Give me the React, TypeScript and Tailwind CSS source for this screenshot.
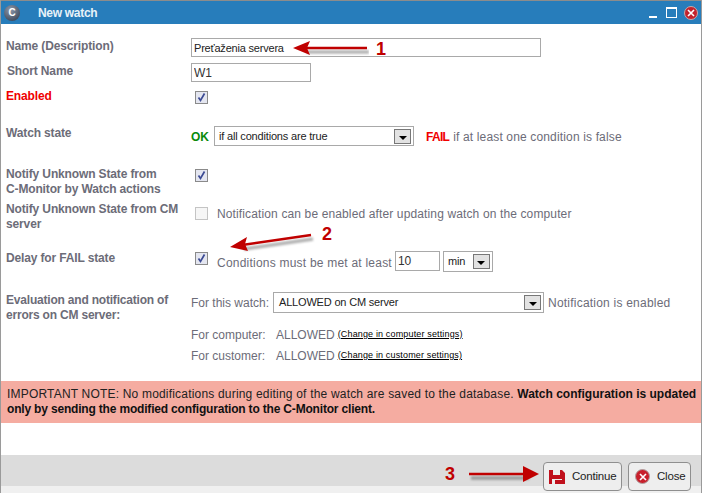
import { ReactNode } from "react";

function Check({ checked = true, className = "" }: { checked?: boolean; className?: string }) {
    return (
        <span className={`flex h-[13px] w-[13px] shrink-0 items-center justify-center border ${checked ? "border-[#8a8a8a] bg-[#e4e6f0]" : "border-[#c4c4c4] bg-[#f6f6f6]"} ${className}`}>
            {checked && (
                <svg width="11" height="11" viewBox="0 0 11 11">
                    <path d="M2.5 5.5 L4.5 8.5 L8.5 1.5" fill="none" stroke="#3b4a94" strokeWidth="1.7" />
                </svg>
            )}
        </span>
    );
}

function Select({ value, className }: { value: string; className: string }) {
    return (
        <div className={`flex items-center justify-between border border-[#a9a9a9] bg-white pl-[4px] pr-[2px] text-[11px] tracking-[-0.18px] text-[#222] ${className}`}>
            <span>{value}</span>
            <span className="flex h-[15px] w-[17px] items-center justify-center border border-[#777] bg-[#e2e2e2]">
                <span className="mt-[3px] h-0 w-0 border-x-[4px] border-t-[4px] border-x-transparent border-t-black" />
            </span>
        </div>
    );
}

function Row({ h, label, children, labelClass = "text-[#6c6c78]" }: { h: string; label: ReactNode; children?: ReactNode; labelClass?: string }) {
    return (
        <div className={`flex ${h}`}>
            <div className={`w-[185px] shrink-0 text-[12px] font-bold leading-[15px] tracking-[-0.14px] ${labelClass}`}>{label}</div>
            <div className="min-w-0 flex-1">{children}</div>
        </div>
    );
}

function Arrow({ className, width, height, d, head }: { className: string; width: number; height: number; d: string; head: string }) {
    return (
        <svg className={`absolute ${className}`} width={width} height={height} viewBox={`0 0 ${width} ${height}`}>
            <path className="blur-[1px]" d={d} fill="none" stroke="#000" strokeOpacity="0.3" strokeWidth="3.5" transform="translate(2 4)" />
            <path d={d} fill="none" stroke="#c00000" strokeWidth="2.5" />
            <polygon points={head} fill="#c00000" />
        </svg>
    );
}

export default function App() {
    return (
        <div className="relative flex h-[493px] w-[702px] flex-col overflow-hidden border-x border-[#9a9a9a] bg-white font-['Liberation_Sans',Arial,sans-serif] text-[12px] text-[#6c6c78]">
            {/* title bar */}
            <div className="flex h-[24px] shrink-0 items-center border-t border-[#8c8c8c] bg-[#277dbb] pl-[3px]">
                <span className="flex h-[16px] w-[16px] items-center justify-center rounded-full bg-[radial-gradient(circle_at_40%_30%,#8d99ab,#2c3648)] text-[10px] font-bold leading-none text-white">C</span>
                <span className="ml-[18px] text-[12px] font-bold tracking-[-0.3px] text-[#e8f2f8]">New watch</span>
                <div className="ml-auto flex items-center pr-[3px]">
                    <span className="mt-[9px] h-[2px] w-[8px] bg-white" />
                    <span className="ml-[9px] h-[11px] w-[11px] border border-t-[2px] border-white" />
                    <span className="ml-[7px] flex h-[14px] w-[14px] items-center justify-center rounded-full border border-[#c9a9a9] bg-[#c2222c]">
                        <svg width="8" height="8" viewBox="0 0 8 8">
                            <path d="M1 1 L7 7 M7 1 L1 7" stroke="#fff" strokeWidth="1.6" />
                        </svg>
                    </span>
                </div>
            </div>

            {/* form */}
            <div className="flex-1 pl-[5px] pt-[14px]">
                <Row h="h-[25px]" label={<span className="relative top-[1px]">Name (Description)</span>}>
                    <input readOnly value="Preťaženia servera" className="h-[19px] w-[350px] border border-[#a9a9a9] px-[2px] text-[11px] tracking-[-0.2px] text-[#222] outline-none" />
                </Row>
                <Row h="h-[25px]" label={<span className="relative left-[1px] top-[1px]">Short Name</span>}>
                    <input readOnly value="W1" className="h-[19px] w-[120px] border border-[#a9a9a9] px-[2px] text-[12px] text-[#333] outline-none" />
                </Row>
                <Row h="h-[38px]" label={<span className="relative top-[1px]">Enabled</span>} labelClass="text-[#f00000]">
                    <div className="pl-[4px] pt-[3px]"><Check /></div>
                </Row>
                <Row h="h-[41px]" label="Watch state">
                    <div className="flex h-[20px] items-center">
                        <span className="w-[23px] pt-[1px] font-bold text-[#0a8a0a]">OK</span>
                        <Select value="if all conditions are true" className="h-[20px] w-[200px]" />
                        <span className="ml-[12px] pt-[1px] font-bold tracking-[-0.7px] text-[#f00000]">FAIL</span>
                        <span className="ml-[4px] pt-[1px] tracking-[0.15px]">if at least one condition is false</span>
                    </div>
                </Row>
                <Row h="h-[35px]" label={<>Notify Unknown State from<br />C-Monitor by Watch actions</>}>
                    <div className="pl-[4px] pt-[2px]"><Check /></div>
                </Row>
                <Row h="h-[48px]" label={<>Notify Unknown State from CM<br />server</>}>
                    <div className="flex items-center pl-[4px] pt-[1px]">
                        <Check checked={false} />
                        <span className="ml-[9px] pt-[2px] tracking-[0.13px]">Notification can be enabled after updating watch on the computer</span>
                    </div>
                </Row>
                <Row h="h-[42px]" label={<span className="relative top-[1px]">Delay for FAIL state</span>}>
                    <div className="flex h-[21px] items-center pl-[4px] pt-[1px]">
                        <Check className="-mt-[5px]" />
                        <span className="ml-[9px] pt-[4px] tracking-[0.22px]">Conditions must be met at least</span>
                        <input readOnly value="10" className="ml-[3px] h-[20px] w-[45px] border border-[#a9a9a9] px-[2px] text-[12px] text-[#333] outline-none" />
                        <Select value="min" className="ml-[3px] h-[21px] w-[50px]" />
                    </div>
                </Row>
                <Row h="h-[35px]" label={<span className="relative top-[1px] tracking-[-0.2px]">Evaluation and notification of<br />errors on CM server:</span>}>
                    <div className="flex h-[21px] items-center">
                        <span className="w-[82px]">For this watch:</span>
                        <Select value="ALLOWED on CM server" className="h-[21px] w-[271px] pl-[5px]" />
                        <span className="ml-[4px] tracking-[0.22px]">Notification is enabled</span>
                    </div>
                </Row>
                <Row h="h-[21px]" label="">
                    <div className="flex h-[15px] items-center">
                        <span className="w-[85px]">For computer:</span>
                        <span>ALLOWED</span>
                        <span className="ml-[3px] text-[9px] tracking-[0.15px] text-black underline">(Change in computer settings)</span>
                    </div>
                </Row>
                <Row h="h-[25px]" label="">
                    <div className="flex h-[15px] items-center">
                        <span className="w-[85px]">For customer:</span>
                        <span>ALLOWED</span>
                        <span className="ml-[3px] text-[9px] tracking-[0.15px] text-black underline">(Change in customer settings)</span>
                    </div>
                </Row>
            </div>

            {/* note */}
            <div className="h-[42px] shrink-0 bg-[#f5aca1] pl-[6px] pt-[6px] text-[12px] leading-[15px] tracking-[0.19px] text-[#222]">
                IMPORTANT NOTE: No modifications during editing of the watch are saved to the database. <b className="tracking-normal text-[#111]">Watch configuration is updated</b>
                <br />
                <b className="tracking-[-0.18px] text-[#111]">only by sending the modified configuration to the C-Monitor client.</b>
            </div>

            {/* footer */}
            <div className="mt-[32px] flex h-[38px] shrink-0 items-start justify-end gap-[6px] border-b-[7px] border-[#f0f0f0] bg-[#dcdcdc] pr-[10px] pt-[7px]">
                <button className="relative z-10 flex h-[29px] w-[79px] shrink-0 items-center rounded-[4px] border border-[#8f8f8f] bg-[#eeeeee] pl-[5px] text-[11.5px] tracking-[-0.2px] text-[#222]">
                    <svg width="16" height="16" viewBox="0 0 16 16">
                        <path fillRule="evenodd" d="M0 1 H13 L16 4 V15 H0 Z M4 1 V6 H11 V1 Z M3 10 V15 H6 V11 H13 V15 V10 Z" fill="#c0101c" />
                    </svg>
                    <span className="ml-[7px]">Continue</span>
                </button>
                <button className="relative z-10 flex h-[29px] w-[63px] shrink-0 items-center rounded-[4px] border border-[#8f8f8f] bg-[#eeeeee] pl-[6px] text-[11.5px] tracking-[-0.2px] text-[#222]">
                    <span className="flex h-[15px] w-[15px] items-center justify-center rounded-full border border-[#b0a0a0] bg-[#c8202c]">
                        <svg width="8" height="8" viewBox="0 0 8 8">
                            <path d="M1 1 L7 7 M7 1 L1 7" stroke="#fff" strokeWidth="1.6" />
                        </svg>
                    </span>
                    <span className="ml-[7px]">Close</span>
                </button>
            </div>

            {/* annotations */}
            <Arrow className="left-[292px] top-[36px]" width={76} height={24} d="M12 12 H74" head="0,12 17,5 14,12 17,19" />
            <span className="absolute left-[375px] top-[39px] text-[18px] font-bold leading-[20px] text-[#c00000]">1</span>
            <Arrow className="left-[229px] top-[231px]" width={86} height={24} d="M12 14 L81 4" head="0,16 17,6 15,13 18,20" />
            <span className="absolute left-[321px] top-[224px] text-[18px] font-bold leading-[20px] text-[#c00000]">2</span>
            <Arrow className="left-[466px] top-[463px]" width={74} height={24} d="M2 11 H60" head="72,11 56,3 56,19" />
            <span className="absolute left-[444px] top-[464px] text-[18px] font-bold leading-[20px] text-[#c00000]">3</span>
        </div>
    );
}
